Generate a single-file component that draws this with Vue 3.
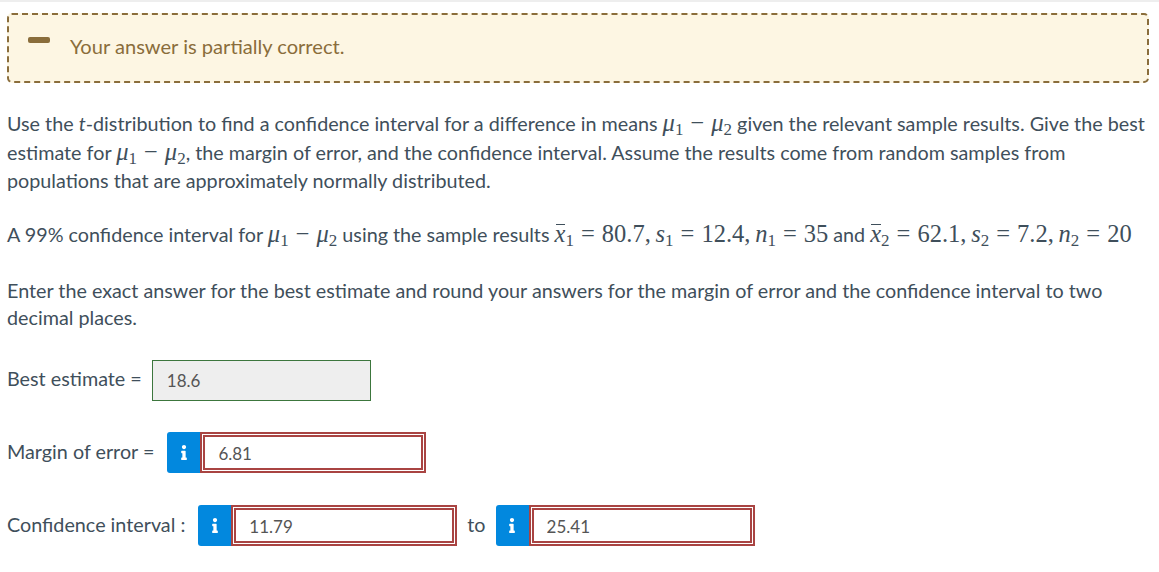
<script setup>
const infoPath = 'M20 424.229h20V279.771H20c-11.046 0-20-8.954-20-20V212c0-11.046 8.954-20 20-20h112c11.046 0 20 8.954 20 20v212.229h20c11.046 0 20 8.954 20 20V492c0 11.046-8.954 20-20 20H20c-11.046 0-20-8.954-20-20v-47.771c0-11.046 8.954-20 20-20zM96 0C56.235 0 24 32.235 24 72s32.235 72 72 72 72-32.235 72-72S135.764 0 96 0z'
</script>

<template>
  <div class="page">
    <div class="alert">
      <span class="minus"></span>
      <span>Your answer is partially correct.</span>
    </div>

    <p class="para first">
      Use the <i>t</i>-distribution to find a confidence interval for a difference in means
      <span class="math"><i class="mu">μ</i><sub>1</sub><span class="op">−</span><i class="mu">μ</i><sub>2</sub></span>
      given the relevant sample results. Give the best estimate for
      <span class="math"><i class="mu">μ</i><sub>1</sub><span class="op">−</span><i class="mu">μ</i><sub>2</sub></span>,
      the margin of error, and the confidence interval. Assume the results come from random samples from populations that are approximately normally distributed.
    </p>

    <p class="para second">
      A 99% confidence interval for
      <span class="math"><i class="mu">μ</i><sub>1</sub><span class="op">−</span><i class="mu">μ</i><sub>2</sub></span>
      using the sample results
      <span class="math"><i class="bar">x</i><sub>1</sub><span class="op">=</span>80.7,<i class="gap">s</i><sub>1</sub><span class="op">=</span>12.4,<i class="gap">n</i><sub>1</sub><span class="op">=</span>35</span>
      and
      <span class="math"><i class="bar">x</i><sub>2</sub><span class="op">=</span>62.1,<i class="gap">s</i><sub>2</sub><span class="op">=</span>7.2,<i class="gap">n</i><sub>2</sub><span class="op">=</span>20</span>
    </p>

    <p class="para third">
      Enter the exact answer for the best estimate and round your answers for the margin of error and the confidence interval to two decimal places.
    </p>

    <div class="row best">
      <label>Best estimate =</label>
      <input class="field correct" value="18.6" readonly />
    </div>

    <div class="row margin">
      <label>Margin of error =</label>
      <div class="group">
        <span class="info"><svg viewBox="0 0 192 512" width="8" height="15"><path :d="infoPath" fill="#fff" /></svg></span>
        <input class="field wrong" value="6.81" readonly />
      </div>
    </div>

    <div class="row interval">
      <label class="interval-label">Confidence interval :</label>
      <div class="group">
        <span class="info"><svg viewBox="0 0 192 512" width="8" height="15"><path :d="infoPath" fill="#fff" /></svg></span>
        <input class="field wrong" value="11.79" readonly />
      </div>
      <label>to</label>
      <div class="group">
        <span class="info"><svg viewBox="0 0 192 512" width="8" height="15"><path :d="infoPath" fill="#fff" /></svg></span>
        <input class="field wrong" value="25.41" readonly />
      </div>
    </div>
  </div>
</template>

<style>
body {
  background: #fff;
}
</style>

<style scoped>
.page {
  box-sizing: border-box;
  height: 572px;
  padding: 13px 10px 0 7px;
  border-top: 2px solid #eee;
  font-family: Lato, "Open Sans", sans-serif;
  font-size: 19.75px;
  color: #3f4f5b;
  overflow: hidden;
}

.alert {
  box-sizing: border-box;
  display: flex;
  align-items: center;
  height: 70px;
  margin-top: -2px;
  padding: 0 0 4px 61px;
  border: 2px dashed #8a6d3b;
  border-radius: 5px;
  background: #fdf6e3;
  color: #8a6d3b;
  font-size: 20.1px;
  position: relative;
}

.minus {
  position: absolute;
  left: 19px;
  top: 22px;
  width: 22px;
  height: 6px;
  border-radius: 2px;
  background: #8a6d3b;
}

.para {
  margin: 0;
  line-height: 28.5px;
}

.first {
  margin-top: 27px;
}

.second {
  margin-top: 25px;
  white-space: nowrap;
}

.third {
  margin-top: 28px;
  line-height: 27px;
}

.math {
  font-family: "Liberation Serif", serif;
  font-size: 24.5px;
  line-height: 0;
  white-space: nowrap;
}

.math i {
  font-style: italic;
}

.math sub {
  font-size: 17px;
  line-height: 0;
  vertical-align: -4px;
}

.op {
  margin: 0 7px;
}

.gap {
  margin-left: 4.75px;
}

.bar {
  position: relative;
}

.bar::before {
  content: "";
  position: absolute;
  left: 1px;
  right: 0;
  top: 4px;
  border-top: 1px solid #3f4f5b;
}

.row {
  display: flex;
  align-items: center;
}

.row label {
  position: relative;
  top: -1px;
}

.row.best label {
  top: -2px;
}

.best {
  margin-top: 29px;
  gap: 10px;
}

.margin {
  margin-top: 31px;
  gap: 13px;
}

.interval {
  margin-top: 32px;
  gap: 10px;
}

.interval-label {
  margin-right: 3px;
}

.group {
  display: flex;
}

.info {
  display: flex;
  align-items: center;
  justify-content: center;
  width: 33px;
  height: 41px;
  border-radius: 3px 0 0 3px;
  background: #0288de;
}

.field {
  box-sizing: border-box;
  width: 226px;
  height: 41px;
  padding: 0 0 0 13px;
  outline: none;
  font-family: Lato, sans-serif;
  font-size: 17px;
  color: #555;
  background: #fff;
}

.correct {
  width: 219px;
  padding-left: 14px;
  border: 1px solid #3c763d;
  background: #eee;
}

.wrong {
  padding-top: 2px;
  border: 5px double #a94442;
}
</style>
